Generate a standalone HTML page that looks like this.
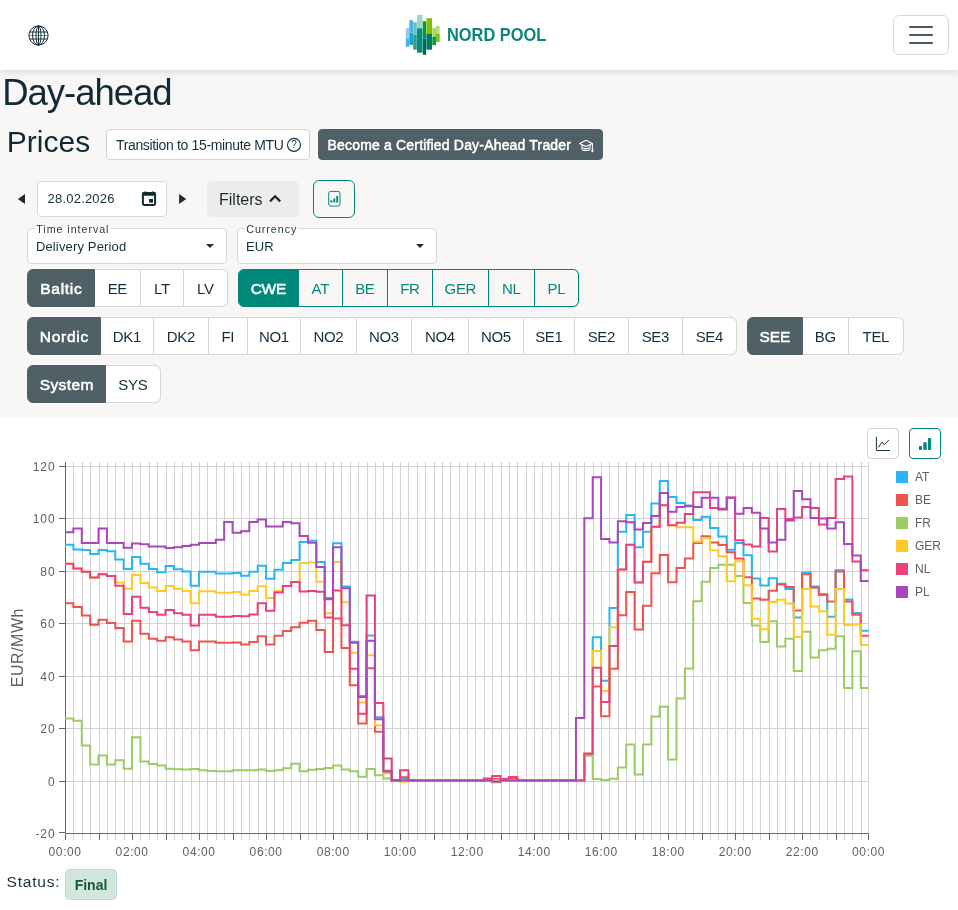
<!DOCTYPE html>
<html lang="en"><head><meta charset="utf-8"><title>Day-ahead Prices | Nord Pool</title>
<style>
*{box-sizing:border-box;margin:0;padding:0}
html,body{width:958px;height:910px;overflow:hidden;background:#fff}
body{position:relative;will-change:transform;font-family:"Liberation Sans",sans-serif;color:#15303a;font-size:16px}
.abs,.t{position:absolute}
.t{white-space:nowrap;line-height:1}
.top{position:absolute;left:0;top:0;width:958px;height:418px;background:#f8f7f5}
.hdr{position:absolute;left:0;top:0;width:958px;height:70px;background:#fff;box-shadow:0 2px 7px rgba(0,0,0,.13)}
.brand{position:absolute;left:446.9px;top:25.100px;font-weight:700;font-size:18.7px;line-height:20px;color:#0b8577;white-space:nowrap;transform-origin:0 0;transform:scaleX(.876)}
.burger{position:absolute;left:893px;top:15px;width:56px;height:40px;border:1px solid #d9d9d9;border-radius:6px;background:#fff}
.burger i{position:absolute;left:15px;width:24px;height:2px;border-radius:1px;background:#4e595e}
h1{position:absolute;left:2.300px;top:70.700px;font-weight:400;font-size:36.500px;letter-spacing:-1.050px;line-height:44px;white-space:nowrap;color:#112a33}
h2{position:absolute;left:6.8px;top:121.5px;font-weight:400;font-size:30px;line-height:40px;white-space:nowrap;color:#112a33}
.btn{position:absolute;height:31px;top:129px;border-radius:4px;font-size:14px;letter-spacing:-.35px;line-height:30px;white-space:nowrap}
.btn.light{left:106px;width:204px;background:#fff;border:1px solid #d4d4d2;padding-left:9px;color:#15303a}
.btn.dark{left:318px;width:285px;background:#4f6166;border:1px solid #4f6166;padding-left:8.5px;color:#fff;font-weight:400;-webkit-text-stroke:.5px #fff;font-size:14px;letter-spacing:.18px}
.date{position:absolute;left:37px;top:181px;width:130px;height:36px;border:1px solid #d9d9d7;border-radius:4px;background:#fff;font-size:13px;letter-spacing:.2px;line-height:34px;padding-left:9.600px}
.filters{position:absolute;left:207px;top:181px;width:92px;height:36px;border-radius:5.500px;background:#ececeb;font-size:16px;line-height:38px;padding-left:12px;color:#1c2b30}
.ibtn{position:absolute;left:313px;top:180px;width:42px;height:38px;border:1px solid #00897b;border-radius:6px;background:#f8f7f5}
.sel{position:absolute;top:228px;width:200px;height:36px;border:1px solid #d9d9d7;border-radius:4px;background:#fff}
.sel b{position:absolute;left:6.600px;top:-6px;padding-left:1.700px;height:12px;background:linear-gradient(#f8f7f5 0,#f8f7f5 5px,#fff 5px);font-weight:400;font-size:10.700px;line-height:12px;letter-spacing:.950px;color:#243a42;white-space:nowrap;overflow:hidden}
.sel span{position:absolute;left:7.900px;top:9.900px;font-size:13px;letter-spacing:.150px;line-height:16px;white-space:nowrap}
.sel i{position:absolute;left:178px;top:14.500px;width:0;height:0;border-left:4px solid transparent;border-right:4px solid transparent;border-top:4.500px solid #15303a}
.grp{position:absolute;height:38px;display:flex;border-radius:6px}
.grp span{display:block;height:38px;line-height:37.5px;text-align:center;font-size:15px;letter-spacing:-.3px;text-indent:-.3px;border:1px solid #d6d6d4;border-left-width:0;background:#fff;color:#15303a;white-space:nowrap;flex:none}
.grp span:first-child{border-radius:6px 0 0 6px;background:#4f6166;border-color:#4f6166;color:#fff;font-weight:400;-webkit-text-stroke:.55px #fff;border-left-width:1px;font-size:15.500px;letter-spacing:.7px;text-indent:.7px}
.grp span:last-child{border-radius:0 6px 6px 0}
.grp.on span{background:#f8f7f5;border-color:#00897b;color:#00897b}
.grp.on span:first-child{background:#00897b;color:#fff}
.cbtn{position:absolute;top:428px;width:32px;height:31px;border:1px solid #d4d4d2;border-radius:4px;background:#fff}
.cbtn.act{border-color:#00897b}
.chart{position:absolute;left:0;top:420px}
.status{position:absolute;left:6.500px;top:872px;font-size:15.500px;line-height:20px;letter-spacing:.800px;color:#1c3139;white-space:nowrap}
.badge{position:absolute;left:65px;top:869px;width:52px;height:31px;border:1px solid #bcdccd;border-radius:4.500px;background:#d1e7dd;color:#15593b;font-weight:700;font-size:14px;line-height:30.600px;text-align:center}

</style></head><body>
<div class="top"></div>
<div class="hdr">
<svg class="abs" style="left:28.100px;top:24.900px" width="21" height="21" viewBox="0 0 21 21" fill="none" stroke="#17323b" stroke-width="1"><circle cx="10.500" cy="10.500" r="9.600"/><ellipse cx="10.500" cy="10.500" rx="6" ry="9.600"/><ellipse cx="10.500" cy="10.500" rx="2.500" ry="9.600"/><path d="M10.500 .9v19.200M1.700 7h17.600M1.700 14h17.600"/><path d="M.9 10.500h19.200" stroke-opacity=".55"/></svg>
<svg class="abs" style="left:404px;top:12px" width="38" height="46" viewBox="404 12 38 46">
<rect x="405.8" y="28.1" width="3.3" height="10.4" fill="#92c9ea"/><rect x="405.8" y="38.5" width="3.3" height="8.3" fill="#41b1e8"/>
<rect x="409.3" y="20.2" width="3.7" height="12.3" fill="#48b2e9"/><rect x="409.3" y="32.5" width="3.7" height="12.4" fill="#1ba4c9"/>
<rect x="413.2" y="22.2" width="3.6" height="12.8" fill="#6ec1b9"/><rect x="413.2" y="35" width="3.6" height="14.7" fill="#2b9e8b"/>
<rect x="417" y="14.9" width="5.5" height="13.3" fill="#9fd4cd"/><rect x="417" y="28.2" width="5.5" height="24.5" fill="#008f81"/>
<rect x="422.8" y="21.3" width="3.3" height="17.4" fill="#009741"/><rect x="422.8" y="38.7" width="3.3" height="16.1" fill="#00675f"/>
<rect x="426.4" y="18.1" width="5.6" height="15.3" fill="#87bd00"/><rect x="426.4" y="33.4" width="5.6" height="16.3" fill="#007b66"/>
<rect x="432.3" y="28.1" width="3.7" height="8.7" fill="#a1d961"/><rect x="432.3" y="36.8" width="3.7" height="8.4" fill="#0b9f41"/>
<rect x="436" y="25.9" width="3.7" height="7.7" fill="#b9e181"/><rect x="436" y="33.6" width="3.7" height="8.3" fill="#79c121"/>
</svg>
<div class="brand">NORD POOL</div>
<div class="burger"><i style="top:10px"></i><i style="top:18px"></i><i style="top:26px"></i></div>
</div>
<h1>Day-ahead</h1>
<h2>Prices</h2>
<div class="btn light">Transition to 15-minute MTU</div>
<div class="btn dark">Become a Certified Day-Ahead Trader</div>
<div class="date">28.02.2026</div>
<div class="filters">Filters</div>
<div class="ibtn"></div>
<div class="sel" style="left:27px"><b style="width:76.400px">Time interval</b><span>Delivery Period</span><i></i></div>
<div class="sel" style="left:237px"><b style="width:53.300px">Currency</b><span>EUR</span><i></i></div>
<div class="grp" style="left:27px;top:269px"><span style="width:68px">Baltic</span><span style="width:46px">EE</span><span style="width:43px">LT</span><span style="width:44px">LV</span></div>
<div class="grp on" style="left:238px;top:269px"><span style="width:61px;letter-spacing:-.2px;text-indent:-.2px">CWE</span><span style="width:44px">AT</span><span style="width:45px">BE</span><span style="width:45px">FR</span><span style="width:56px">GER</span><span style="width:46px">NL</span><span style="width:44px">PL</span></div>
<div class="grp" style="left:27px;top:317px"><span style="width:74px">Nordic</span><span style="width:53px">DK1</span><span style="width:55px">DK2</span><span style="width:39px">FI</span><span style="width:53px">NO1</span><span style="width:56px">NO2</span><span style="width:55px">NO3</span><span style="width:57px">NO4</span><span style="width:55px">NO5</span><span style="width:51px">SE1</span><span style="width:54px">SE2</span><span style="width:54px">SE3</span><span style="width:54px">SE4</span></div>
<div class="grp" style="left:747px;top:317px"><span style="width:56px;letter-spacing:-.1px;text-indent:-.1px">SEE</span><span style="width:46px">BG</span><span style="width:55px">TEL</span></div>
<div class="grp" style="left:27px;top:365px"><span style="width:79px;letter-spacing:.4px;text-indent:.4px">System</span><span style="width:55px">SYS</span></div>
<div class="cbtn" style="left:867px"></div>
<div class="cbtn act" style="left:909px"></div>
<svg class="chart" width="958" height="450" viewBox="0 420 958 450">
<path d="M73.5 462V833.5M82.5 462V833.5M90.5 462V833.5M99.5 462V833.5M107.5 462V833.5M115.5 462V833.5M124.5 462V833.5M132.5 462V833.5M140.5 462V833.5M149.5 462V833.5M157.5 462V833.5M166.5 462V833.5M174.5 462V833.5M182.5 462V833.5M191.5 462V833.5M199.5 462V833.5M207.5 462V833.5M216.5 462V833.5M224.5 462V833.5M233.5 462V833.5M241.5 462V833.5M249.5 462V833.5M258.5 462V833.5M266.5 462V833.5M274.5 462V833.5M283.5 462V833.5M291.5 462V833.5M300.5 462V833.5M308.5 462V833.5M316.5 462V833.5M325.5 462V833.5M333.5 462V833.5M341.5 462V833.5M350.5 462V833.5M358.5 462V833.5M367.5 462V833.5M375.5 462V833.5M383.5 462V833.5M392.5 462V833.5M400.5 462V833.5M408.5 462V833.5M417.5 462V833.5M425.5 462V833.5M434.5 462V833.5M442.5 462V833.5M450.5 462V833.5M459.5 462V833.5M467.5 462V833.5M475.5 462V833.5M484.5 462V833.5M492.5 462V833.5M501.5 462V833.5M509.5 462V833.5M517.5 462V833.5M526.5 462V833.5M534.5 462V833.5M542.5 462V833.5M551.5 462V833.5M559.5 462V833.5M568.5 462V833.5M576.5 462V833.5M584.5 462V833.5M593.5 462V833.5M601.5 462V833.5M609.5 462V833.5M618.5 462V833.5M626.5 462V833.5M635.5 462V833.5M643.5 462V833.5M651.5 462V833.5M660.5 462V833.5M668.5 462V833.5M676.5 462V833.5M685.5 462V833.5M693.5 462V833.5M702.5 462V833.5M710.5 462V833.5M718.5 462V833.5M727.5 462V833.5M735.5 462V833.5M743.5 462V833.5M752.5 462V833.5M760.5 462V833.5M769.5 462V833.5M777.5 462V833.5M785.5 462V833.5M794.5 462V833.5M802.5 462V833.5M810.5 462V833.5M819.5 462V833.5M827.5 462V833.5M836.5 462V833.5M844.5 462V833.5M852.5 462V833.5M861.5 462V833.5M868.5 462V833.5M65.5 781.5H868.5M65.5 728.5H868.5M65.5 676.5H868.5M65.5 623.5H868.5M65.5 571.5H868.5M65.5 518.5H868.5M65.5 466.5H868.5" stroke="#d1d1d1" stroke-width="1" fill="none"/>
<path d="M73.5 833.5v6.5M82.5 833.5v6.5M90.5 833.5v6.5M107.5 833.5v6.5M115.5 833.5v6.5M124.5 833.5v6.5M140.5 833.5v6.5M149.5 833.5v6.5M157.5 833.5v6.5M174.5 833.5v6.5M182.5 833.5v6.5M191.5 833.5v6.5M207.5 833.5v6.5M216.5 833.5v6.5M224.5 833.5v6.5M241.5 833.5v6.5M249.5 833.5v6.5M258.5 833.5v6.5M274.5 833.5v6.5M283.5 833.5v6.5M291.5 833.5v6.5M308.5 833.5v6.5M316.5 833.5v6.5M325.5 833.5v6.5M341.5 833.5v6.5M350.5 833.5v6.5M358.5 833.5v6.5M375.5 833.5v6.5M383.5 833.5v6.5M392.5 833.5v6.5M408.5 833.5v6.5M417.5 833.5v6.5M425.5 833.5v6.5M442.5 833.5v6.5M450.5 833.5v6.5M459.5 833.5v6.5M475.5 833.5v6.5M484.5 833.5v6.5M492.5 833.5v6.5M509.5 833.5v6.5M517.5 833.5v6.5M526.5 833.5v6.5M542.5 833.5v6.5M551.5 833.5v6.5M559.5 833.5v6.5M576.5 833.5v6.5M584.5 833.5v6.5M593.5 833.5v6.5M609.5 833.5v6.5M618.5 833.5v6.5M626.5 833.5v6.5M643.5 833.5v6.5M651.5 833.5v6.5M660.5 833.5v6.5M676.5 833.5v6.5M685.5 833.5v6.5M693.5 833.5v6.5M710.5 833.5v6.5M718.5 833.5v6.5M727.5 833.5v6.5M743.5 833.5v6.5M752.5 833.5v6.5M760.5 833.5v6.5M777.5 833.5v6.5M785.5 833.5v6.5M794.5 833.5v6.5M810.5 833.5v6.5M819.5 833.5v6.5M827.5 833.5v6.5M844.5 833.5v6.5M852.5 833.5v6.5M861.5 833.5v6.5" stroke="#d1d1d1" stroke-width="1" fill="none"/>
<path d="M65.5 833.5v6.5M99.5 833.5v6.5M132.5 833.5v6.5M166.5 833.5v6.5M199.5 833.5v6.5M233.5 833.5v6.5M266.5 833.5v6.5M300.5 833.5v6.5M333.5 833.5v6.5M367.5 833.5v6.5M400.5 833.5v6.5M434.5 833.5v6.5M467.5 833.5v6.5M501.5 833.5v6.5M534.5 833.5v6.5M568.5 833.5v6.5M601.5 833.5v6.5M635.5 833.5v6.5M668.5 833.5v6.5M702.5 833.5v6.5M735.5 833.5v6.5M769.5 833.5v6.5M802.5 833.5v6.5M836.5 833.5v6.5M868.5 833.5v6.5" stroke="#666" stroke-width="1" fill="none"/>
<path d="M59 832.5h6.5M59 781.5h6.5M59 728.5h6.5M59 676.5h6.5M59 623.5h6.5M59 571.5h6.5M59 518.5h6.5M59 466.5h6.5M65.5 462V833.5H868.5" stroke="#666" stroke-width="1" fill="none"/>
<path d="M65.02 544.75H73.4V549.6H81.77V549.99H90.15V554.06H98.52V549.99H106.9V551.31H115.28V559.44H123.65V568.88H132.03V557.08H140.4V563.64H148.78V568.88H157.16V572.29H165.53V566.0H173.91V569.15H182.28V571.51H190.66V585.67H199.04V571.77H207.41V571.77H215.79V573.61H224.16V573.61H232.54V573.08H240.92V575.7H249.29V571.77H257.67V565.74H266.04V578.85H274.42V569.67H282.8V563.11H291.17V559.96H299.55V542.12H307.92V540.81H316.3V562.06H324.68V598.0H333.05V543.17H341.43V586.46H349.8V641.82H358.18V696.12H366.56V635.52H374.93V717.37H383.31V771.42H391.68V780.6H400.06V778.76H408.44V780.6H416.81V780.6H425.19V780.6H433.56V780.6H441.94V780.6H450.32V780.6H458.69V780.6H467.07V780.6H475.44V780.6H483.82V780.6H492.2V780.6H500.57V780.6H508.95V780.6H517.32V780.6H525.7V780.6H534.08V780.6H542.45V780.6H550.83V780.6H559.2V780.6H567.58V780.6H575.96V780.6H584.33V753.84H592.71V637.36H601.08V680.64H609.46V607.97H617.84V531.63H626.21V515.1H634.59V547.37H642.96V531.63H651.34V503.56H659.72V481.0H668.09V497.0H676.47V503.03H684.84V505.39H693.22V520.09H701.6V516.68H709.97V527.96H718.35V536.61H726.72V549.73H735.1V542.91H743.48V555.37H751.85V578.59H760.23V585.54H768.6V578.33H776.98V583.84H785.36V589.08H793.73V617.42H802.11V572.56H810.48V586.46H818.86V595.12H827.24V616.63H835.61V570.2H843.99V599.58H852.36V612.96H860.74V630.8H868.5" stroke="#29b6f6" stroke-width="2" fill="none" stroke-linejoin="miter"/>
<path d="M65.02 603.25H73.4V606.92H81.77V615.58H90.15V624.76H98.52V619.78H106.9V622.93H115.28V627.91H123.65V641.55H132.03V620.83H140.4V633.68H148.78V638.67H157.16V640.77H165.53V637.36H173.91V639.46H182.28V641.55H190.66V650.21H199.04V641.55H207.41V641.55H215.79V642.87H224.16V642.87H232.54V642.6H240.92V644.44H249.29V642.08H257.67V636.31H266.04V644.44H274.42V635.78H282.8V631.06H291.17V627.13H299.55V622.67H307.92V620.83H316.3V630.01H324.68V652.05H333.05V618.47H341.43V648.11H349.8V685.37H358.18V723.41H366.56V668.31H374.93V731.8H383.31V770.63H391.68V780.6H400.06V777.19H408.44V780.6H416.81V780.6H425.19V780.6H433.56V780.6H441.94V780.6H450.32V780.6H458.69V780.6H467.07V780.6H475.44V780.6H483.82V780.6H492.2V779.03H500.57V780.6H508.95V778.5H517.32V780.6H525.7V780.6H534.08V780.6H542.45V780.6H550.83V780.6H559.2V780.6H567.58V780.6H575.96V780.6H584.33V753.84H592.71V686.55H601.08V716.32H609.46V668.84H617.84V615.32H626.21V591.97H634.59V629.49H642.96V605.87H651.34V573.34H659.72V554.98H668.09V582.26H676.47V568.1H684.84V558.52H693.22V542.91H701.6V536.35H709.97V542.39H718.35V545.01H726.72V552.36H735.1V558.52H743.48V577.28H751.85V598.53H760.23V599.84H768.6V590.66H776.98V584.62H785.36V586.99H793.73V610.6H802.11V574.13H810.48V587.77H818.86V594.33H827.24V601.41H835.61V571.51H843.99V601.41H852.36V614.79H860.74V635.78H868.5" stroke="#ef5350" stroke-width="2" fill="none" stroke-linejoin="miter"/>
<path d="M65.02 718.42H73.4V720.78H81.77V745.45H90.15V764.47H98.52V755.41H106.9V764.47H115.28V760.14H123.65V768.79H132.03V737.31H140.4V761.58H148.78V764.07H157.16V765.38H165.53V768.79H173.91V769.32H182.28V769.58H190.66V768.93H199.04V770.21H207.41V770.89H215.79V771.16H224.16V771.16H232.54V770.21H240.92V770.21H249.29V770.21H257.67V769.58H266.04V770.89H274.42V770.21H282.8V768.27H291.17V763.81H299.55V771.16H307.92V769.84H316.3V769.06H324.68V768.01H333.05V765.38H341.43V769.58H349.8V771.16H358.18V776.66H366.56V769.06H374.93V775.35H383.31V778.5H391.68V780.6H400.06V780.6H408.44V780.6H416.81V780.6H425.19V780.6H433.56V780.6H441.94V780.6H450.32V780.6H458.69V780.6H467.07V780.6H475.44V780.6H483.82V780.6H492.2V780.08H500.57V780.6H508.95V780.6H517.32V780.6H525.7V780.6H534.08V780.6H542.45V780.6H550.83V780.6H559.2V780.6H567.58V780.6H575.96V780.6H584.33V755.68H592.71V779.03H601.08V780.08H609.46V778.76H617.84V767.48H626.21V744.4H634.59V774.57H642.96V744.4H651.34V716.59H659.72V706.75H668.09V759.61H676.47V698.48H684.84V668.58H693.22V601.15H701.6V581.74H709.97V568.1H718.35V564.69H726.72V564.69H735.1V575.97H743.48V602.99H751.85V625.55H760.23V642.08H768.6V621.35H776.98V646.54H785.36V638.67H793.73V670.94H802.11V631.85H810.48V657.56H818.86V650.34H827.24V648.64H835.61V636.31H843.99V687.99H852.36V651.26H860.74V687.99H868.5" stroke="#9ccc65" stroke-width="2" fill="none" stroke-linejoin="miter"/>
<path d="M65.02 563.64H73.4V568.62H81.77V571.77H90.15V577.54H98.52V574.13H106.9V575.97H115.28V582.53H123.65V588.82H132.03V574.92H140.4V583.05H148.78V587.51H157.16V590.92H165.53V585.94H173.91V588.82H182.28V590.92H190.66V603.25H199.04V591.18H207.41V591.18H215.79V592.76H224.16V592.76H232.54V591.97H240.92V594.86H249.29V590.92H257.67V586.2H266.04V598.0H274.42V590.92H282.8V585.94H291.17V582.0H299.55V563.11H307.92V562.59H316.3V581.74H324.68V613.22H333.05V562.06H341.43V602.2H349.8V652.84H358.18V702.42H366.56V655.2H374.93V725.24H383.31V773.25H391.68V780.6H400.06V781.65H408.44V780.6H416.81V780.6H425.19V780.6H433.56V780.6H441.94V780.6H450.32V780.6H458.69V780.6H467.07V780.6H475.44V780.6H483.82V780.6H492.2V782.44H500.57V780.6H508.95V780.6H517.32V780.6H525.7V780.6H534.08V780.6H542.45V780.6H550.83V780.6H559.2V780.6H567.58V780.6H575.96V780.6H584.33V753.84H592.71V651.0H601.08V690.88H609.46V627.13H617.84V569.41H626.21V544.75H634.59V582.53H642.96V561.8H651.34V526.78H659.72V505.13H668.09V525.2H676.47V527.17H684.84V527.17H693.22V541.86H701.6V538.19H709.97V550.26H718.35V556.29H726.72V581.21H735.1V561.14H743.48V585.15H751.85V618.73H760.23V629.22H768.6V601.94H776.98V599.84H785.36V603.51H793.73V637.09H802.11V589.08H810.48V606.4H818.86V611.25H827.24V634.73H835.61V589.08H843.99V625.03H852.36V624.5H860.74V644.97H868.5" stroke="#ffca28" stroke-width="2" fill="none" stroke-linejoin="miter"/>
<path d="M65.02 563.64H73.4V568.62H81.77V571.77H90.15V577.54H98.52V574.13H106.9V575.97H115.28V585.67H123.65V614.01H132.03V596.69H140.4V607.71H148.78V611.91H157.16V614.79H165.53V610.07H173.91V613.22H182.28V614.79H190.66V625.55H199.04V614.79H207.41V614.79H215.79V616.63H224.16V616.63H232.54V616.11H240.92V616.37H249.29V614.53H257.67V603.25H266.04V610.86H274.42V592.5H282.8V585.94H291.17V582.0H299.55V591.45H307.92V590.92H316.3V591.71H324.68V617.55H333.05V590.4H341.43V625.29H349.8V668.84H358.18V713.7H366.56V595.38H374.93V702.94H383.31V758.56H391.68V780.6H400.06V770.37H408.44V780.6H416.81V780.6H425.19V780.6H433.56V780.6H441.94V780.6H450.32V780.6H458.69V780.6H467.07V780.6H475.44V780.6H483.82V778.5H492.2V775.88H500.57V778.76H508.95V776.93H517.32V780.6H525.7V780.6H534.08V780.6H542.45V780.6H550.83V780.6H559.2V780.6H567.58V780.6H575.96V780.6H584.33V753.84H592.71V667.79H601.08V701.89H609.46V646.01H617.84V569.41H626.21V544.75H634.59V582.53H642.96V561.8H651.34V526.78H659.72V505.13H668.09V525.2H676.47V522.71H684.84V514.05H693.22V492.28H701.6V492.28H709.97V508.02H718.35V508.81H726.72V497.52H735.1V540.29H743.48V544.49H751.85V546.58H760.23V517.99H768.6V551.57H776.98V509.07H785.36V519.04H793.73V517.46H802.11V507.1H810.48V508.02H818.86V524.55H827.24V517.99H835.61V478.9H843.99V476.54H852.36V561.54H860.74V570.2H868.5" stroke="#ec407a" stroke-width="2" fill="none" stroke-linejoin="miter"/>
<path d="M65.02 532.29H73.4V528.48H81.77V542.99H90.15V542.99H98.52V528.48H106.9V542.99H115.28V542.99H123.65V547.63H132.03V543.44H140.4V544.22H148.78V546.58H157.16V546.58H165.53V547.9H173.91V547.37H182.28V546.06H190.66V544.75H199.04V542.91H207.41V542.91H215.79V539.76H224.16V521.92H232.54V532.68H240.92V531.37H249.29V521.92H257.67V519.56H266.04V526.38H274.42V526.38H282.8V521.92H291.17V523.23H299.55V536.09H307.92V542.65H316.3V567.05H324.68V599.32H333.05V547.37H341.43V588.3H349.8V642.87H358.18V696.91H366.56V640.77H374.93V719.21H383.31V771.42H391.68V780.34H400.06V780.6H408.44V780.6H416.81V780.6H425.19V780.6H433.56V780.6H441.94V780.6H450.32V780.6H458.69V780.6H467.07V780.6H475.44V780.6H483.82V780.6H492.2V781.65H500.57V780.6H508.95V780.6H517.32V780.6H525.7V780.6H534.08V780.6H542.45V780.6H550.83V780.6H559.2V780.6H567.58V780.6H575.96V718.03H584.33V518.25H592.71V477.32H601.08V539.11H609.46V542.39H617.84V521.14H626.21V522.19H634.59V529.53H642.96V522.97H651.34V515.89H659.72V493.06H668.09V511.69H676.47V507.1H684.84V506.18H693.22V507.1H701.6V497.79H709.97V497.79H718.35V509.59H726.72V497.79H735.1V513.79H743.48V508.02H751.85V512.74H760.23V528.48H768.6V542.39H776.98V539.76H785.36V520.61H793.73V490.97H802.11V499.36H810.48V517.99H818.86V518.51H827.24V528.48H835.61V522.19H843.99V543.96H852.36V555.5H860.74V580.95H868.5" stroke="#ab47bc" stroke-width="2" fill="none" stroke-linejoin="miter"/>
<g font-family="Liberation Sans, sans-serif" font-size="12" fill="#606060">
<text x="55.5" y="837.9" text-anchor="end" letter-spacing=".9">-20</text>
<text x="55.5" y="785.9" text-anchor="end" letter-spacing=".9">0</text>
<text x="55.5" y="732.9" text-anchor="end" letter-spacing=".9">20</text>
<text x="55.5" y="680.9" text-anchor="end" letter-spacing=".9">40</text>
<text x="55.5" y="627.9" text-anchor="end" letter-spacing=".9">60</text>
<text x="55.5" y="575.9" text-anchor="end" letter-spacing=".9">80</text>
<text x="55.5" y="522.9" text-anchor="end" letter-spacing=".9">100</text>
<text x="55.5" y="470.9" text-anchor="end" letter-spacing=".9">120</text>
<text x="64.82" y="856" text-anchor="middle" letter-spacing=".6" dx=".3">00:00</text>
<text x="131.83" y="856" text-anchor="middle" letter-spacing=".6" dx=".3">02:00</text>
<text x="198.84" y="856" text-anchor="middle" letter-spacing=".6" dx=".3">04:00</text>
<text x="265.84" y="856" text-anchor="middle" letter-spacing=".6" dx=".3">06:00</text>
<text x="332.85" y="856" text-anchor="middle" letter-spacing=".6" dx=".3">08:00</text>
<text x="399.86" y="856" text-anchor="middle" letter-spacing=".6" dx=".3">10:00</text>
<text x="466.87" y="856" text-anchor="middle" letter-spacing=".6" dx=".3">12:00</text>
<text x="533.88" y="856" text-anchor="middle" letter-spacing=".6" dx=".3">14:00</text>
<text x="600.88" y="856" text-anchor="middle" letter-spacing=".6" dx=".3">16:00</text>
<text x="667.89" y="856" text-anchor="middle" letter-spacing=".6" dx=".3">18:00</text>
<text x="734.9" y="856" text-anchor="middle" letter-spacing=".6" dx=".3">20:00</text>
<text x="801.91" y="856" text-anchor="middle" letter-spacing=".6" dx=".3">22:00</text>
<text x="868.3" y="856" text-anchor="middle" letter-spacing=".6" dx=".3">00:00</text>
<text transform="translate(23.2 647.6) rotate(-90)" text-anchor="middle" font-size="16" letter-spacing=".5">EUR/MWh</text>
<rect x="896" y="471" width="12" height="12" fill="#29b6f6"/>
<text x="915" y="481.3">AT</text>
<rect x="896" y="494" width="12" height="12" fill="#ef5350"/>
<text x="915" y="504.3">BE</text>
<rect x="896" y="517" width="12" height="12" fill="#9ccc65"/>
<text x="915" y="527.3">FR</text>
<rect x="896" y="540" width="12" height="12" fill="#ffca28"/>
<text x="915" y="550.3">GER</text>
<rect x="896" y="563" width="12" height="12" fill="#ec407a"/>
<text x="915" y="573.3">NL</text>
<rect x="896" y="586" width="12" height="12" fill="#ab47bc"/>
<text x="915" y="596.3">PL</text>
</g></svg>
<svg class="abs" style="left:0;top:0;pointer-events:none" width="958" height="910" viewBox="0 0 958 910">
<!-- help icon -->
<circle cx="294" cy="144.900" r="6.500" fill="none" stroke="#15303a" stroke-width="1.100"/>
<text x="294" y="148.200" text-anchor="middle" font-family="Liberation Sans, sans-serif" font-size="10" font-weight="400" fill="#15303a">?</text>
<!-- mortarboard -->
<g fill="none" stroke="#fff" stroke-width="1.100" stroke-linejoin="round"><path d="M586 140.300l-6.400 3.100 6.400 3.200 6.400-3.200z"/><path d="M582 145v3.400c0 1.200 1.800 2.100 4 2.100s4-.9 4-2.100V145"/><path d="M583.300 147.600c.6.900 1.600 1.300 2.700 1.300s2.100-.4 2.700-1.300"/><path d="M592.400 143.600v6.600"/><rect x="591.700" y="150" width="1.400" height="2" fill="#fff" stroke-width=".5"/></g>
<!-- date arrows -->
<path d="M25 193.900v10.200l-7.100-5.100z" fill="#24282b"/>
<path d="M179.100 193.900v10.200l7.100-5.100z" fill="#24282b"/>
<!-- calendar -->
<g fill="#0f2a33"><rect x="142.900" y="192.900" width="12.200" height="12" rx="1.300" fill="none" stroke="#0f2a33" stroke-width="2"/><rect x="142.500" y="192" width="13" height="3.800" rx="1"/><rect x="144.600" y="191.400" width="1.600" height="1.600"/><rect x="151.800" y="191.400" width="1.600" height="1.600"/><rect x="149.100" y="199" width="3.900" height="3.600"/></g>
<!-- chevron -->
<path d="M270 201.400l5.100-5.100 5.100 5.100" fill="none" stroke="#1f2426" stroke-width="2.200"/>
<!-- report icon -->
<rect x="328.700" y="191.400" width="11.300" height="14.700" rx="2" fill="none" stroke="#00897b" stroke-width="1"/>
<path d="M331.400 202.600v-2.400M334.300 202.600v-4.200M337.200 202.600v-6.600" stroke="#00897b" stroke-width="1.900" fill="none"/>
<!-- line chart icon -->
<g fill="none" stroke="#17323b" stroke-width="1"><path d="M876.400 436.800v13.700h13.500"/><path d="M878.500 447.400l3.300-5.200 2.800 2.400 4.300-4.700"/></g>
<!-- bar chart icon -->
<g fill="#00897b"><rect x="918.900" y="446" width="3.100" height="3.900" rx=".7"/><rect x="923.300" y="442.200" width="3.400" height="7.700" rx=".7"/><rect x="927.900" y="438" width="3.200" height="11.900" rx=".7"/></g>
</svg>
<div class="status">Status:</div>
<div class="badge">Final</div>

</body></html>
